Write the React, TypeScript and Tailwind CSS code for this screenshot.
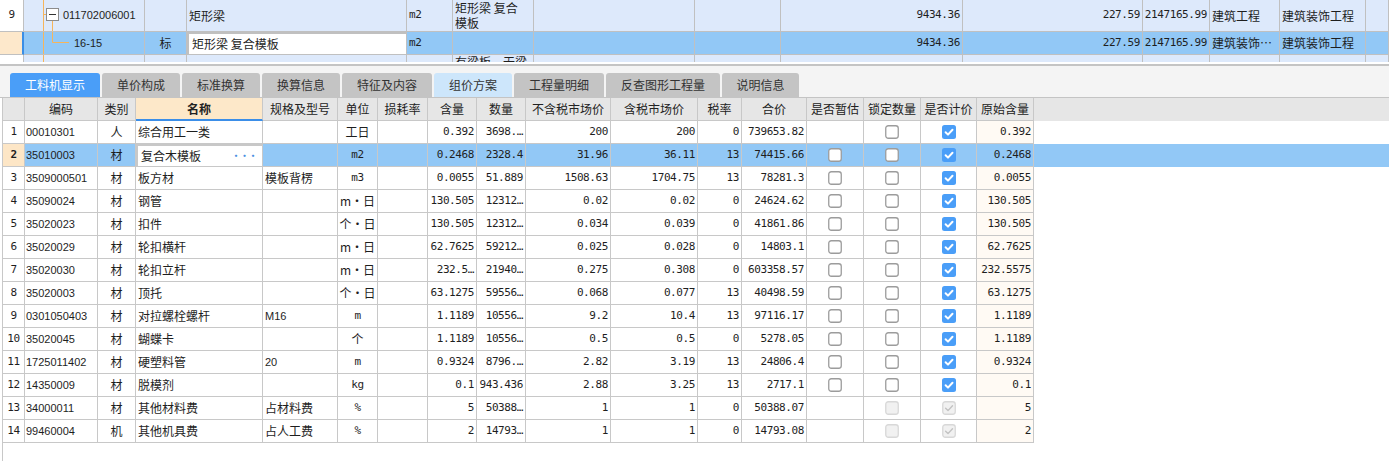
import clsx from "clsx";

const MONO = "font-['DejaVu_Sans_Mono','Noto_Sans_CJK_SC',monospace] text-[11px] tracking-[-0.4px]";
const SANS = "font-['Liberation_Sans','Noto_Sans_CJK_SC',sans-serif] text-[11px]";

type Check = "none" | "off" | "on" | "disOff" | "disOn";

type Row = {
  code: string;
  kind: string;
  name: string;
  spec: string;
  unit: string;
  qty: string;
  amount: string;
  price: string;
  taxPrice: string;
  rate: string;
  total: string;
  est: Check;
  lock: Check;
  bill: Check;
  orig: string;
};

const rows: Row[] = [
  { code: "00010301", kind: "人", name: "综合用工一类", spec: "", unit: "工日", qty: "0.392", amount: "3698.…", price: "200", taxPrice: "200", rate: "0", total: "739653.82", est: "none", lock: "off", bill: "on", orig: "0.392" },
  { code: "35010003", kind: "材", name: "复合木模板", spec: "", unit: "m2", qty: "0.2468", amount: "2328.4", price: "31.96", taxPrice: "36.11", rate: "13", total: "74415.66", est: "off", lock: "off", bill: "on", orig: "0.2468" },
  { code: "3509000501", kind: "材", name: "板方材", spec: "模板背楞", unit: "m3", qty: "0.0055", amount: "51.889", price: "1508.63", taxPrice: "1704.75", rate: "13", total: "78281.3", est: "off", lock: "off", bill: "on", orig: "0.0055" },
  { code: "35090024", kind: "材", name: "钢管", spec: "", unit: "m・日", qty: "130.505", amount: "12312…", price: "0.02", taxPrice: "0.02", rate: "0", total: "24624.62", est: "off", lock: "off", bill: "on", orig: "130.505" },
  { code: "35020023", kind: "材", name: "扣件", spec: "", unit: "个・日", qty: "130.505", amount: "12312…", price: "0.034", taxPrice: "0.039", rate: "0", total: "41861.86", est: "off", lock: "off", bill: "on", orig: "130.505" },
  { code: "35020029", kind: "材", name: "轮扣横杆", spec: "", unit: "m・日", qty: "62.7625", amount: "59212…", price: "0.025", taxPrice: "0.028", rate: "0", total: "14803.1", est: "off", lock: "off", bill: "on", orig: "62.7625" },
  { code: "35020030", kind: "材", name: "轮扣立杆", spec: "", unit: "m・日", qty: "232.5…", amount: "21940…", price: "0.275", taxPrice: "0.308", rate: "0", total: "603358.57", est: "off", lock: "off", bill: "on", orig: "232.5575" },
  { code: "35020003", kind: "材", name: "顶托", spec: "", unit: "个・日", qty: "63.1275", amount: "59556…", price: "0.068", taxPrice: "0.077", rate: "13", total: "40498.59", est: "off", lock: "off", bill: "on", orig: "63.1275" },
  { code: "0301050403", kind: "材", name: "对拉螺栓螺杆", spec: "M16", unit: "m", qty: "1.1189", amount: "10556…", price: "9.2", taxPrice: "10.4", rate: "13", total: "97116.17", est: "off", lock: "off", bill: "on", orig: "1.1189" },
  { code: "35020045", kind: "材", name: "蝴蝶卡", spec: "", unit: "个", qty: "1.1189", amount: "10556…", price: "0.5", taxPrice: "0.5", rate: "0", total: "5278.05", est: "off", lock: "off", bill: "on", orig: "1.1189" },
  { code: "1725011402", kind: "材", name: "硬塑料管", spec: "20", unit: "m", qty: "0.9324", amount: "8796.…", price: "2.82", taxPrice: "3.19", rate: "13", total: "24806.4", est: "off", lock: "off", bill: "on", orig: "0.9324" },
  { code: "14350009", kind: "材", name: "脱模剂", spec: "", unit: "kg", qty: "0.1", amount: "943.436", price: "2.88", taxPrice: "3.25", rate: "13", total: "2717.1", est: "off", lock: "off", bill: "on", orig: "0.1" },
  { code: "34000011", kind: "材", name: "其他材料费", spec: "占材料费", unit: "%", qty: "5", amount: "50388…", price: "1", taxPrice: "1", rate: "0", total: "50388.07", est: "none", lock: "disOff", bill: "disOn", orig: "5" },
  { code: "99460004", kind: "机", name: "其他机具费", spec: "占人工费", unit: "%", qty: "2", amount: "14793…", price: "1", taxPrice: "1", rate: "0", total: "14793.08", est: "none", lock: "disOff", bill: "disOn", orig: "2" },
];

const tabs = [
  { label: "工料机显示", w: "w-[90px]", look: "bg-[#4a9ef8] text-white" },
  { label: "单价构成", w: "w-[78px]", look: "bg-[#c4c4c4] text-[#333]" },
  { label: "标准换算", w: "w-[78px]", look: "bg-[#c4c4c4] text-[#333]" },
  { label: "换算信息", w: "w-[78px]", look: "bg-[#c4c4c4] text-[#333]" },
  { label: "特征及内容", w: "w-[90px]", look: "bg-[#c4c4c4] text-[#333]" },
  { label: "组价方案", w: "w-[78px]", look: "bg-[#cde6fb] text-[#333]" },
  { label: "工程量明细", w: "w-[90px]", look: "bg-[#c4c4c4] text-[#333]" },
  { label: "反查图形工程量", w: "w-[114px]", look: "bg-[#c4c4c4] text-[#333]" },
  { label: "说明信息", w: "w-[77px]", look: "bg-[#c4c4c4] text-[#333]" },
];

const headers = ["", "编码", "类别", "名称", "规格及型号", "单位", "损耗率", "含量", "数量", "不含税市场价", "含税市场价", "税率", "合价", "是否暂估", "锁定数量", "是否计价", "原始含量"];

const topCols = "grid grid-cols-[24px_121px_42px_220px_46px_81px_161px_86px_182px_180px_67px_70px_86px_23px]";
const mainCols = "grid grid-cols-[22px_73px_38px_127px_75px_40px_50px_49px_49px_85px_87px_44px_65px_57px_57px_56px_57px]";

function Box({ state }: { state: Check }) {
  if (state === "none") return null;
  const dis = state === "disOff" || state === "disOn";
  const on = state === "on";
  return (
    <svg width="14" height="14" viewBox="0 0 14 14">
      {on ? (
        <rect x="0" y="0" width="14" height="14" rx="2.5" fill="#4a9ef8" />
      ) : (
        <rect
          x="0.75"
          y="0.75"
          width="12.5"
          height="12.5"
          rx="2.5"
          fill={dis ? "#f1f1f1" : "#fff"}
          stroke={dis ? "#d8d8d8" : "#9c9c9c"}
          strokeWidth="1.3"
        />
      )}
      {(on || state === "disOn") && (
        <path
          d="M3.6 7.3 L6 9.6 L10.5 4.7"
          fill="none"
          stroke={on ? "#fff" : "#c2c2c2"}
          strokeWidth={on ? 2 : 1.4}
          strokeLinecap="round"
          strokeLinejoin="round"
        />
      )}
    </svg>
  );
}

function TopGrid() {
  const c = "border-r border-b border-[#c0c0c0] overflow-hidden whitespace-nowrap flex items-center";
  const tree = "#f6b55b";
  return (
    <div className="h-[62px] overflow-hidden">
      <div className={clsx(topCols, "h-[32px] bg-[#dde9fb]")}>
        <div className={clsx(c, "justify-center bg-white", MONO)}>9</div>
        <div className={clsx(c, "relative")}>
          <svg className="absolute left-0 top-0" width="120" height="31">
            <line x1="19.5" y1="0" x2="19.5" y2="31" stroke={tree} />
            <line x1="19.5" y1="14.5" x2="23" y2="14.5" stroke={tree} />
            <line x1="28.5" y1="20" x2="28.5" y2="31" stroke={tree} />
            <rect x="22.5" y="8.5" width="12" height="12" fill="#fff" stroke="#8c8c8c" />
            <line x1="25" y1="14.5" x2="32" y2="14.5" stroke="#333" />
          </svg>
          <span className={clsx("relative pl-[39px]", SANS)}>011702006001</span>
        </div>
        <div className={c} />
        <div className={clsx(c, "pl-[2px]")}>矩形梁</div>
        <div className={clsx(c, "pl-[2px]", MONO)}>m2</div>
        <div className={clsx(c, "flex-col !items-start justify-start pl-[2px] leading-[15px]")}>
          <span>矩形梁 复合</span>
          <span>模板</span>
        </div>
        <div className={c} />
        <div className={c} />
        <div className={clsx(c, "justify-end pr-[2px]", MONO)}>9434.36</div>
        <div className={clsx(c, "justify-end pr-[2px]", MONO)}>227.59</div>
        <div className={clsx(c, "justify-end pr-[2px]", MONO)}>2147165.99</div>
        <div className={clsx(c, "pl-[2px]")}>建筑工程</div>
        <div className={clsx(c, "pl-[2px]")}>建筑装饰工程</div>
        <div className={c} />
      </div>
      <div className={clsx(topCols, "h-[23px] bg-[#92c8f6]")}>
        <div className={clsx(c, "bg-[#fde8cb] border-r-2 border-r-[#3a8ee6]")} />
        <div className={clsx(c, "relative")}>
          <svg className="absolute left-0 top-0" width="120" height="22">
            <line x1="19.5" y1="0" x2="19.5" y2="22" stroke={tree} />
            <line x1="28.5" y1="0" x2="28.5" y2="10.5" stroke={tree} />
            <line x1="28.5" y1="10.5" x2="45" y2="10.5" stroke={tree} />
          </svg>
          <span className={clsx("relative pl-[50px]", SANS)}>16-15</span>
        </div>
        <div className={clsx(c, "justify-center")}>标</div>
        <div className={clsx(c, "pl-[3px] bg-white border-2 border-[#7d7d7d]")}>矩形梁 复合模板</div>
        <div className={clsx(c, "pl-[2px]", MONO)}>m2</div>
        <div className={c} />
        <div className={c} />
        <div className={c} />
        <div className={clsx(c, "justify-end pr-[2px]", MONO)}>9434.36</div>
        <div className={clsx(c, "justify-end pr-[2px]", MONO)}>227.59</div>
        <div className={clsx(c, "justify-end pr-[2px]", MONO)}>2147165.99</div>
        <div className={clsx(c, "pl-[2px]")}>建筑装饰…</div>
        <div className={clsx(c, "pl-[2px]")}>建筑装饰工程</div>
        <div className={c} />
      </div>
      <div className={clsx(topCols, "h-[23px] bg-[#dde9fb]")}>
        <div className={clsx(c, "bg-white")} />
        <div className={clsx(c, "relative")}>
          <svg className="absolute left-0 top-0" width="120" height="22">
            <line x1="19.5" y1="0" x2="19.5" y2="22" stroke={tree} />
          </svg>
        </div>
        <div className={c} />
        <div className={c} />
        <div className={c} />
        <div className={clsx(c, "items-start pl-[2px] leading-[14px]")}>有梁板，无梁</div>
        <div className={c} />
        <div className={c} />
        <div className={c} />
        <div className={c} />
        <div className={c} />
        <div className={c} />
        <div className={c} />
        <div className={c} />
      </div>
    </div>
  );
}

function Tabs() {
  return (
    <div className="h-[32px] bg-[#f4f4f4] border-b border-[#c4c4c4] flex items-end gap-[2px] pl-[10px]">
      {tabs.map((t) => (
        <div
          key={t.label}
          className={clsx("h-[24px] rounded-t-[3px] flex items-center justify-center text-[12px]", t.w, t.look)}
        >
          {t.label}
        </div>
      ))}
    </div>
  );
}

function MainTable() {
  const c = "h-[23px] border-r border-b border-[#c8c8c8] overflow-hidden whitespace-nowrap flex items-center";
  const num = clsx("justify-end pr-[2px]", MONO);
  return (
    <div className="flex-1 ml-[2px] border-l border-[#c8c8c8]">
      <div className={clsx(mainCols, "bg-[#e6e6e6] text-[12px] text-[#222]")}>
        {headers.map((h) => (
          <div
            key={h || "rn"}
            className={clsx(
              c,
              "justify-center",
              h === "名称" && "bg-[#fde8c9] font-bold border-b-2 border-b-[#3b8ee8]"
            )}
          >
            {h}
          </div>
        ))}
      </div>
      {rows.map((r, i) => {
        const sel = i === 1;
        return (
          <div key={r.code} className={clsx(mainCols, sel ? "bg-[#92c8f6]" : "bg-white")}>
            <div className={clsx(c, "justify-center", MONO, sel && "bg-[#fde6c6] font-bold")}>{i + 1}</div>
            <div className={clsx(c, "pl-[1px]", SANS)}>{r.code}</div>
            <div className={clsx(c, "justify-center")}>{r.kind}</div>
            {sel ? (
              <div className={clsx(c, "pl-[3px] bg-white border-2 border-[#7b7b7b]")}>
                <span>{r.name}</span>
                <span className="ml-auto mr-[5px] text-[#4a90e2] font-bold text-[9px] tracking-[-0.5px]">···</span>
              </div>
            ) : (
              <div className={clsx(c, "pl-[2px]")}>{r.name}</div>
            )}
            <div className={clsx(c, "pl-[2px]", /^[A-Z0-9]/.test(r.spec) ? SANS : "")}>{r.spec}</div>
            <div className={clsx(c, "justify-center", /^[a-z%]+\d?$/.test(r.unit) && MONO)}>{r.unit}</div>
            <div className={c} />
            <div className={clsx(c, num)}>{r.qty}</div>
            <div className={clsx(c, num)}>{r.amount}</div>
            <div className={clsx(c, num)}>{r.price}</div>
            <div className={clsx(c, num)}>{r.taxPrice}</div>
            <div className={clsx(c, num)}>{r.rate}</div>
            <div className={clsx(c, num)}>{r.total}</div>
            <div className={clsx(c, "justify-center")}>
              <Box state={r.est} />
            </div>
            <div className={clsx(c, "justify-center")}>
              <Box state={r.lock} />
            </div>
            <div className={clsx(c, "justify-center")}>
              <Box state={r.bill} />
            </div>
            <div className={clsx(c, num, !sel && "bg-[#fffaf4]")}>{r.orig}</div>
          </div>
        );
      })}
    </div>
  );
}

export default function App() {
  return (
    <div className="w-[1389px] h-[461px] overflow-hidden bg-white text-[12px] text-[#1e1e1e] font-['Noto_Sans_CJK_SC',sans-serif] flex flex-col">
      <TopGrid />
      <div className="h-[2px] shrink-0" />
      <div className="h-[2px] shrink-0 bg-[#c4c4c4]" />
      <Tabs />
      <MainTable />
    </div>
  );
}
